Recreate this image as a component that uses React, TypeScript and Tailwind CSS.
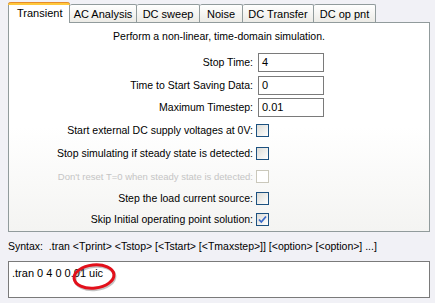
import React from 'react'

const tabs = [
  { name: 'Transient', w: 'w-[62px]' },
  { name: 'AC Analysis', w: 'w-[67px]' },
  { name: 'DC sweep', w: 'w-[63px]' },
  { name: 'Noise', w: 'w-[43px]' },
  { name: 'DC Transfer', w: 'w-[71px]' },
  { name: 'DC op pnt', w: 'w-[62px]' },
]

function Checkbox({ checked, disabled }: { checked?: boolean; disabled?: boolean }) {
  if (disabled) {
    return <div className="ml-[3px] w-[13px] h-[13px] border border-[#cac8bb] bg-white" />
  }
  return (
    <div className="ml-[3px] w-[13px] h-[13px] border border-[#1c5180] bg-gradient-to-br from-[#dcdcd7] to-white flex items-center justify-center">
      {checked && (
        <svg width="9" height="9" viewBox="0 0 9 9">
          <path d="M1 4.5 L3.3 7 L8 1.5" fill="none" stroke="#3a6ac8" strokeWidth="1.8" />
        </svg>
      )}
    </div>
  )
}

function InputRow({ label, value, mt }: { label: string; value: string; mt: string }) {
  return (
    <div className={`flex items-center h-[21px] ${mt}`}>
      <div className="w-[244px] text-right">{label}</div>
      <div className="ml-[5px] w-[66px] h-[19px] border border-[#7a7a7a] bg-white pl-[3px] flex items-center text-[11px]">
        {value}
      </div>
    </div>
  )
}

function CheckRow({ label, checked, disabled, mt }: { label: string; checked?: boolean; disabled?: boolean; mt: string }) {
  return (
    <div className={`flex items-center h-[21px] ${mt}`}>
      <div className={`w-[244px] text-right ${disabled ? 'text-[#c5c5c5] text-[9.5px]' : ''}`}>{label}</div>
      <Checkbox checked={checked} disabled={disabled} />
    </div>
  )
}

export default function App() {
  return (
    <div className="w-[435px] h-[303px] bg-[#f1f1f6] text-[10.5px] leading-[13px] text-black font-['Liberation_Sans',Arial,sans-serif] overflow-hidden">
      {/* tab strip */}
      <div className="h-[22px] flex items-end pl-[8px] text-[11px]">
        {tabs.map((t, i) =>
          i === 0 ? (
            <div
              key={t.name}
              className={`${t.w} h-[21px] -mb-[1px] relative z-10 bg-white border-x border-[#919b9c] rounded-t-[3px] flex flex-col`}
            >
              <div className="h-[3px] bg-[#ffc83c] border-t border-[#e68b2c] rounded-t-[3px] -mx-[1px]" />
              <div className="pl-[8px] pt-[2px]">{t.name}</div>
            </div>
          ) : (
            <div
              key={t.name}
              className={`${t.w} h-[18px] border-t border-r border-[#919b9c] rounded-t-[2px] bg-gradient-to-b from-white to-[#ecebe6] flex items-center justify-center pt-[1px]`}
            >
              {t.name}
            </div>
          )
        )}
      </div>

      {/* panel */}
      <div className="ml-[8px] w-[422px] h-[210px] border border-[#919b9c] bg-gradient-to-b from-white via-white to-[#f4f4f2] flex flex-col">
        <div className="pt-[7px] text-center">Perform a non-linear, time-domain simulation.</div>
        <InputRow label="Stop Time:" value="4" mt="mt-[9px]" />
        <InputRow label="Time to Start Saving Data:" value="0" mt="mt-[2px]" />
        <InputRow label="Maximum Timestep:" value="0.01" mt="mt-[1px]" />
        <CheckRow label="Start external DC supply voltages at 0V:" mt="mt-[2px]" />
        <CheckRow label="Stop simulating if steady state is detected:" mt="mt-[2px]" />
        <CheckRow label="Don't reset T=0 when steady state is detected:" disabled mt="mt-[2px]" />
        <CheckRow label="Step the load current source:" mt="mt-[1px]" />
        <CheckRow label="Skip Initial operating point solution:" checked mt="mt-0" />
      </div>

      <div className="mt-[8px] pl-[8px] whitespace-pre">
        {'Syntax:  .tran <Tprint> <Tstop> [<Tstart> [<Tmaxstep>]] [<option> [<option>] ...]'}
      </div>

      <div className="relative mt-[8px] ml-[8px] w-[422px] h-[37px] border border-[#7a7a7a] bg-white pl-[3px] pt-[5px] text-[11px]">
        .tran 0 4 0 0.01 uic
        <svg className="absolute left-[60px] top-[-1px]" width="50" height="32" viewBox="0 0 50 32">
          <ellipse cx="26" cy="17" rx="20" ry="11.5" fill="none" stroke="#555" strokeOpacity="0.35" strokeWidth="3" transform="rotate(-6 26 17)" />
          <ellipse cx="25" cy="15.5" rx="20" ry="11.5" fill="none" stroke="#e3101b" strokeWidth="3" transform="rotate(-6 25 15.5)" />
        </svg>
      </div>
    </div>
  )
}
